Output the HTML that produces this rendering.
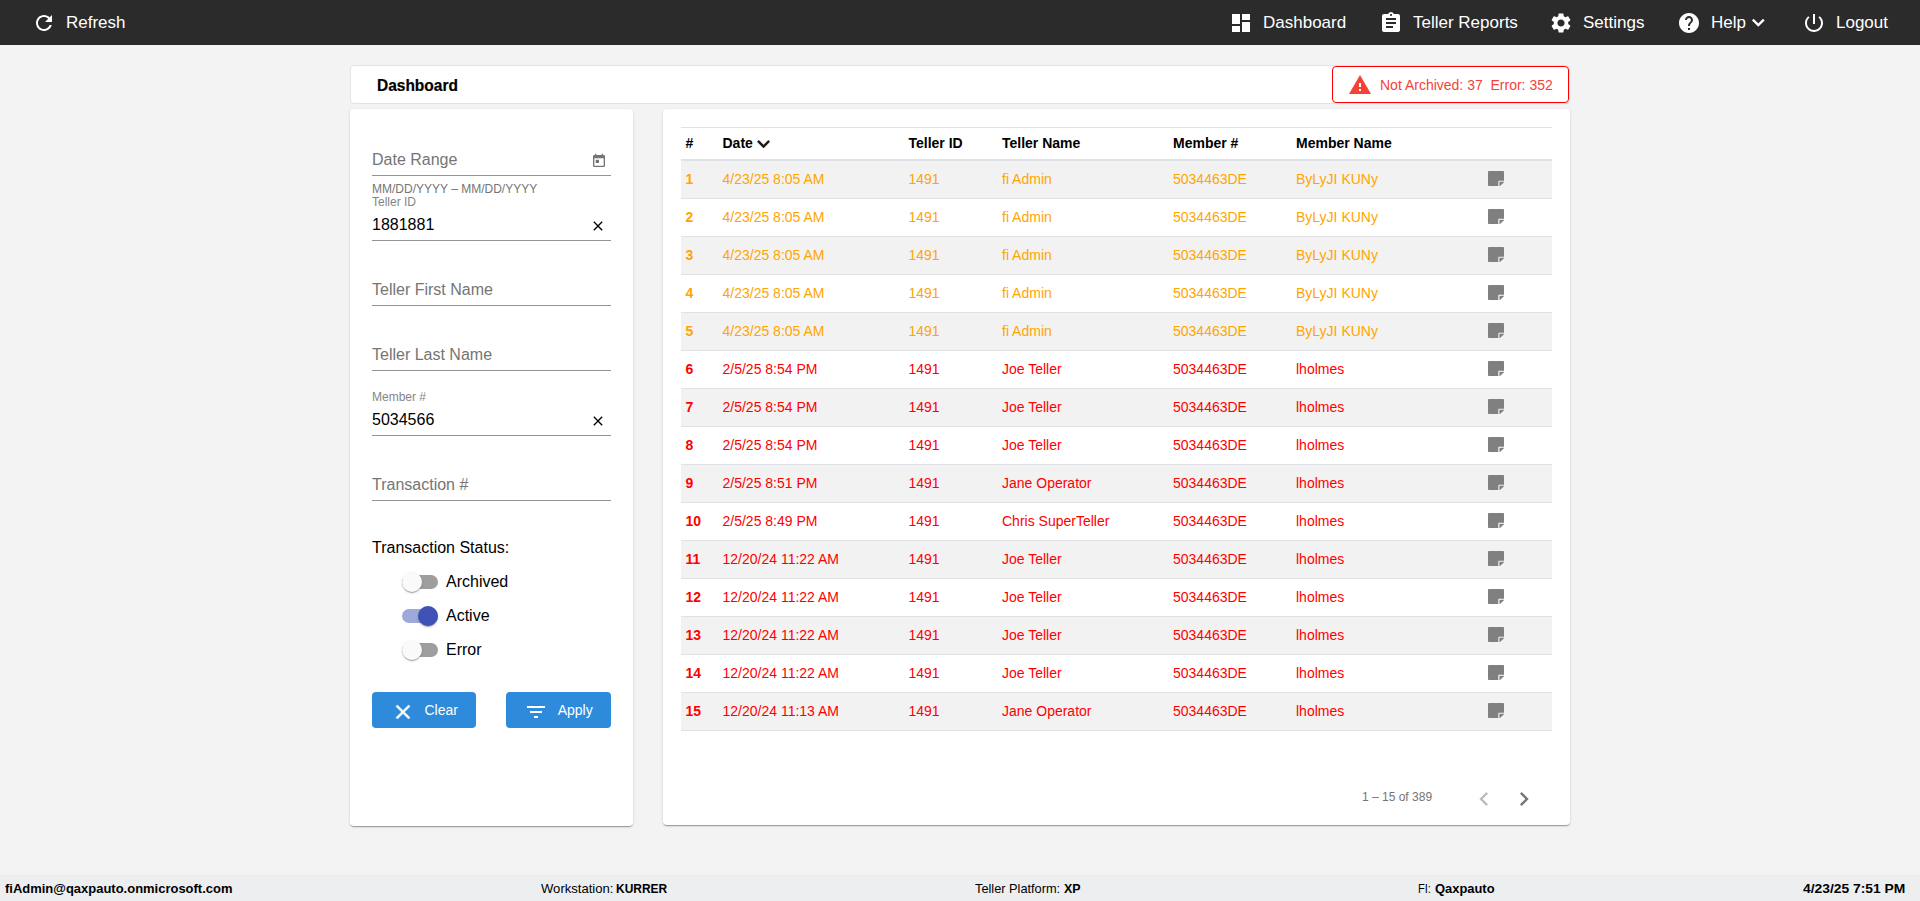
<!DOCTYPE html>
<html lang="en">
<head>
<meta charset="utf-8">
<title>Dashboard</title>
<style>
*{box-sizing:border-box}
html,body{margin:0;padding:0}
body{width:1920px;height:901px;overflow:hidden;background:#f3f3f3;font-family:"Liberation Sans",sans-serif;color:#000;position:relative}
svg{display:block}
/* NAV */
#nav{position:absolute;left:0;top:0;width:1920px;height:45px;background:#2b2b2b;color:#fff;font-size:17px}
#nav .item{position:absolute;top:0;height:45px;line-height:46px;white-space:nowrap}
#nav .item svg{position:absolute;fill:#fff}
/* TITLE */
#title{position:absolute;left:350px;top:65px;width:1220px;height:39px;background:#fff;border:1px solid #e3e3e3;border-radius:4px}
#title h1{position:absolute;left:25.9px;top:1px;margin:0;font-size:16px;line-height:37px;font-weight:bold;transform:scaleX(.968);transform-origin:0 50%;-webkit-text-stroke:.2px #000;white-space:nowrap}
#alert{position:absolute;left:1332px;top:66px;width:237px;height:37px;background:#fff;border:1px solid #ff0000;border-radius:4px;color:#f44336;font-size:14px;line-height:37px;white-space:nowrap}
#alert svg{position:absolute;left:15.4px;top:6px;fill:#f44336}
#alert span{position:absolute;left:47px;top:0}
/* PANELS */
.card{position:absolute;background:#fff;border-radius:4px;box-shadow:0 2px 1px -1px rgba(0,0,0,.2),0 1px 1px 0 rgba(0,0,0,.14),0 1px 3px 0 rgba(0,0,0,.12)}
#left{left:350px;top:109px;width:283px;height:717px}
#right{left:663px;top:109px;width:907px;height:716px}

/* LEFT FORM */
.fld{position:absolute;left:22px;width:239px;height:1px;background:#949494}
.ph{position:absolute;left:22px;font-size:16px;line-height:20px;color:#757575;white-space:nowrap}
.val{position:absolute;left:22px;font-size:16px;line-height:20px;color:#000;white-space:nowrap}
.lbl{position:absolute;left:22px;font-size:12px;line-height:14px;color:#858585;white-space:nowrap}
.hint{position:absolute;left:22px;font-size:12px;line-height:14px;color:#757575;white-space:nowrap}
.ico{position:absolute}
.tg{position:absolute;left:52px;width:36px;height:14px;border-radius:7px;background:#9e9e9e}
.tg i{position:absolute;left:0;top:-3px;width:20px;height:20px;border-radius:50%;background:#fafafa;box-shadow:0 2px 1px -1px rgba(0,0,0,.2),0 1px 1px 0 rgba(0,0,0,.14),0 1px 3px 0 rgba(0,0,0,.12)}
.tg.on{background:#9fa8da}
.tg.on i{left:16px;background:#3f51b5}
.tgl{position:absolute;left:96px;font-size:16px;line-height:20px;color:#000}
.btn{position:absolute;top:583px;height:36px;border-radius:4px;background:#2e8bdb;color:#fff;font-size:14px;line-height:36px}
.btn svg{position:absolute;fill:#fff;top:8px}
.btn span{position:absolute;top:0}

/* TABLE */
#tbl{position:absolute;left:18px;top:18px;width:871px;border-collapse:separate;border-spacing:0;font-size:14px;table-layout:fixed}
#tbl th{height:34px;border-top:1px solid #dee2e6;border-bottom:2px solid #dee2e6;text-align:left;font-weight:bold;padding:0 0 2px 4px;color:#000;vertical-align:middle;line-height:20px;white-space:nowrap}
#tbl td{height:38px;border-bottom:1px solid #dee2e6;padding:0 0 2px 4px;vertical-align:middle;line-height:20px;white-space:nowrap}
#tbl tr.s td{background:#f2f2f2}
#tbl tr.o td{color:#ffa500}
#tbl tr.r td{color:#ff0000}
#tbl td:first-child{font-weight:bold}
#tbl td svg{fill:#808080}
#tbl th:nth-child(-n+3),#tbl td:nth-child(-n+3){padding-left:4.5px}
#tbl td:last-child{padding:0 0 3px 7px}
#tbl th svg{display:inline-block;vertical-align:-.6px;margin-left:3.9px}
#pg{position:absolute;left:699px;top:681px;font-size:12px;line-height:14px;color:#757575;white-space:nowrap}
.pga{position:absolute;top:676px}
/* FOOTER */
#foot{position:absolute;left:0;top:875px;width:1920px;height:26px;background:#edeef0;font-size:13.5px;line-height:26px;color:#000}
#foot span,#foot b{position:absolute;top:1px;white-space:nowrap;transform-origin:0 50%;display:block}
#foot b{font-weight:bold}
</style>
</head>
<body>
<div id="nav">
<div class="item" style="left:66px"><svg style="left:-34px;top:11px" width="24" height="24" viewBox="0 0 24 24"><path d="M17.65 6.35C16.2 4.9 14.21 4 12 4c-4.42 0-7.99 3.58-7.99 8s3.57 8 7.99 8c3.73 0 6.84-2.55 7.73-6h-2.08c-.82 2.33-3.04 4-5.65 4-3.31 0-6-2.69-6-6s2.69-6 6-6c1.66 0 3.14.69 4.22 1.78L13 11h7V4l-2.35 2.35z"/></svg>Refresh</div>
<div class="item" style="left:1263px"><svg style="left:-34px;top:11px" width="24" height="24" viewBox="0 0 24 24"><path d="M3 13h8V3H3v10zm0 8h8v-6H3v6zm10 0h8V11h-8v10zm0-18v6h8V3h-8z"/></svg>Dashboard</div>
<div class="item" style="left:1413px"><svg style="left:-34px;top:11px" width="24" height="24" viewBox="0 0 24 24"><path d="M19 3h-4.18C14.4 1.84 13.3 1 12 1c-1.3 0-2.4.84-2.82 2H5c-1.1 0-2 .9-2 2v14c0 1.1.9 2 2 2h14c1.1 0 2-.9 2-2V5c0-1.1-.9-2-2-2zm-7 0c.55 0 1 .45 1 1s-.45 1-1 1-1-.45-1-1 .45-1 1-1zm2 14H7v-2h7v2zm3-4H7v-2h10v2zm0-4H7V7h10v2z"/></svg>Teller Reports</div>
<div class="item" style="left:1583px"><svg style="left:-34px;top:11px" width="24" height="24" viewBox="0 0 24 24"><path d="M19.14 12.94c.04-.3.06-.61.06-.94 0-.32-.02-.64-.07-.94l2.03-1.58c.18-.14.23-.41.12-.61l-1.92-3.32c-.12-.22-.37-.29-.59-.22l-2.39.96c-.5-.38-1.03-.7-1.62-.94l-.36-2.54c-.04-.24-.24-.41-.48-.41h-3.84c-.24 0-.43.17-.47.41l-.36 2.54c-.59.24-1.13.57-1.62.94l-2.39-.96c-.22-.08-.47 0-.59.22L2.74 8.87c-.12.21-.08.47.12.61l2.03 1.58c-.05.3-.09.63-.09.94s.02.64.07.94l-2.03 1.58c-.18.14-.23.41-.12.61l1.92 3.32c.12.22.37.29.59.22l2.39-.96c.5.38 1.03.7 1.62.94l.36 2.54c.05.24.24.41.48.41h3.84c.24 0 .44-.17.47-.41l.36-2.54c.59-.24 1.13-.56 1.62-.94l2.39.96c.22.08.47 0 .59-.22l1.92-3.32c.12-.22.07-.47-.12-.61l-2.01-1.58zM12 15.6c-1.98 0-3.6-1.62-3.6-3.6s1.62-3.6 3.6-3.6 3.6 1.62 3.6 3.6-1.62 3.6-3.6 3.6z"/></svg>Settings</div>
<div class="item" style="left:1711px"><svg style="left:-34px;top:11px" width="24" height="24" viewBox="0 0 24 24"><path d="M12 2C6.48 2 2 6.48 2 12s4.48 10 10 10 10-4.48 10-10S17.52 2 12 2zm1 17h-2v-2h2v2zm2.07-7.75l-.9.92C13.45 12.9 13 13.5 13 15h-2v-.5c0-1.1.45-2.1 1.17-2.83l1.24-1.26c.37-.36.59-.86.59-1.41 0-1.1-.9-2-2-2s-2 .9-2 2H8c0-2.21 1.79-4 4-4s4 1.79 4 4c0 .88-.36 1.68-.93 2.25z"/></svg>Help<svg style="left:40px;top:18.2px;fill:none" width="15" height="10" viewBox="0 0 15 10"><path d="M1.8 1.6L7.3 7.1 12.8 1.6" stroke="#fff" stroke-width="2.3" fill="none"/></svg></div>
<div class="item" style="left:1836px"><svg style="left:-34px;top:11px" width="24" height="24" viewBox="0 0 24 24"><path d="M13 3h-2v10h2V3zm4.83 2.170l-1.42 1.42C17.99 7.86 19 9.81 19 12c0 3.87-3.13 7-7 7s-7-3.13-7-7c0-2.19 1.01-4.14 2.58-5.42L6.17 5.17C4.23 6.82 3 9.26 3 12c0 4.97 4.03 9 9 9s9-4.03 9-9c0-2.740-1.23-5.18-3.17-6.83z"/></svg>Logout</div>
</div>
<div id="title"><h1>Dashboard</h1></div>
<div id="alert"><svg width="24" height="24" viewBox="0 0 24 24"><path d="M1 21h22L12 2 1 21zm12-3h-2v-2h2v2zm0-4h-2v-4h2v4z"/></svg><span>Not Archived: 37&nbsp; Error: 352</span></div>
<div id="left" class="card">
<div class="ph" style="top:41px">Date Range</div>
<svg class="ico" style="left:241px;top:44px;fill:#757575" width="16" height="16" viewBox="0 0 24 24"><path d="M19 3h-1V1h-2v2H8V1H6v2H5c-1.11 0-1.99.9-1.99 2L3 19c0 1.1.89 2 2 2h14c1.1 0 2-.9 2-2V5c0-1.1-.9-2-2-2zm0 16H5V8h14v11zM7 10h5v5H7z"/></svg>
<div class="fld" style="top:66px"></div>
<div class="hint" style="top:73px">MM/DD/YYYY – MM/DD/YYYY</div>
<div class="lbl" style="top:86px">Teller ID</div>
<div class="val" style="top:106px">1881881</div>
<svg class="ico" style="left:239.5px;top:109px;fill:#000" width="16" height="16" viewBox="0 0 24 24"><path d="M19 6.41L17.59 5 12 10.59 6.410 5 5 6.41 10.59 12 5 17.59 6.41 19 12 13.41 17.59 19 19 17.59 13.410 12z"/></svg>
<div class="fld" style="top:131px"></div>
<div class="ph" style="top:171px">Teller First Name</div>
<div class="fld" style="top:196px"></div>
<div class="ph" style="top:236px">Teller Last Name</div>
<div class="fld" style="top:261px"></div>
<div class="lbl" style="top:281px">Member #</div>
<div class="val" style="top:301px">5034566</div>
<svg class="ico" style="left:239.5px;top:304px;fill:#000" width="16" height="16" viewBox="0 0 24 24"><path d="M19 6.41L17.59 5 12 10.59 6.410 5 5 6.41 10.59 12 5 17.59 6.41 19 12 13.41 17.59 19 19 17.59 13.410 12z"/></svg>
<div class="fld" style="top:326px"></div>
<div class="ph" style="top:366px">Transaction #</div>
<div class="fld" style="top:391px"></div>
<div class="val" style="top:429px">Transaction Status:</div>
<div class="tg" style="top:466px"><i></i></div><div class="tgl" style="top:463px">Archived</div>
<div class="tg on" style="top:500px"><i></i></div><div class="tgl" style="top:497px">Active</div>
<div class="tg" style="top:534px"><i></i></div><div class="tgl" style="top:531px">Error</div>
<div class="btn" style="left:22px;width:104px"><svg style="left:18.5px" width="24" height="24" viewBox="0 0 24 24"><path stroke="#fff" stroke-width=".5" d="M19 6.41L17.59 5 12 10.59 6.410 5 5 6.41 10.59 12 5 17.59 6.41 19 12 13.41 17.59 19 19 17.59 13.410 12z"/></svg><span style="left:52.5px">Clear</span></div>
<div class="btn" style="left:156px;width:105px"><svg style="left:18px" width="24" height="24" viewBox="0 0 24 24"><path d="M10 18h4v-2h-4v2zM3 6v2h18V6H3zm3 7h12v-2H6v2z"/></svg><span style="left:51.7px">Apply</span></div>
</div>
<div id="right" class="card">
<table id="tbl">
<colgroup><col style="width:37px"><col style="width:186px"><col style="width:94px"><col style="width:171px"><col style="width:123px"><col style="width:189px"><col style="width:71px"></colgroup>
<thead><tr><th>#</th><th>Date<svg width="13.1" height="8.3" viewBox="0 0 13.1 8.3"><path d="M.9 .9L6.55 6.55 12.2 .9" stroke="#1c1c1c" stroke-width="2.5" fill="none"/></svg></th><th>Teller ID</th><th>Teller Name</th><th>Member #</th><th>Member Name</th><th></th></tr></thead>
<tbody>
<tr class="o s"><td>1</td><td>4/23/25 8:05 AM</td><td>1491</td><td>fi Admin</td><td>5034463DE</td><td>ByLyJI KUNy</td><td><svg width="16" height="15" viewBox="0 32 448 448" preserveAspectRatio="none"><path d="M312 320h136V56c0-13.300-10.700-24-24-24H24C10.700 32 0 42.700 0 56v400c0 13.300 10.700 24 24 24h264V344c0-13.200 10.800-24 24-24zm129 55l-98 98c-4.500 4.500-10.600 7-17 7h-6V352h128v6.100c0 6.300-2.500 12.400-7 16.900z"/></svg></td></tr>
<tr class="o"><td>2</td><td>4/23/25 8:05 AM</td><td>1491</td><td>fi Admin</td><td>5034463DE</td><td>ByLyJI KUNy</td><td><svg width="16" height="15" viewBox="0 32 448 448" preserveAspectRatio="none"><path d="M312 320h136V56c0-13.300-10.700-24-24-24H24C10.700 32 0 42.700 0 56v400c0 13.300 10.700 24 24 24h264V344c0-13.200 10.800-24 24-24zm129 55l-98 98c-4.500 4.500-10.600 7-17 7h-6V352h128v6.100c0 6.300-2.500 12.400-7 16.900z"/></svg></td></tr>
<tr class="o s"><td>3</td><td>4/23/25 8:05 AM</td><td>1491</td><td>fi Admin</td><td>5034463DE</td><td>ByLyJI KUNy</td><td><svg width="16" height="15" viewBox="0 32 448 448" preserveAspectRatio="none"><path d="M312 320h136V56c0-13.300-10.700-24-24-24H24C10.700 32 0 42.700 0 56v400c0 13.300 10.700 24 24 24h264V344c0-13.200 10.800-24 24-24zm129 55l-98 98c-4.500 4.500-10.600 7-17 7h-6V352h128v6.100c0 6.300-2.500 12.400-7 16.900z"/></svg></td></tr>
<tr class="o"><td>4</td><td>4/23/25 8:05 AM</td><td>1491</td><td>fi Admin</td><td>5034463DE</td><td>ByLyJI KUNy</td><td><svg width="16" height="15" viewBox="0 32 448 448" preserveAspectRatio="none"><path d="M312 320h136V56c0-13.300-10.700-24-24-24H24C10.700 32 0 42.700 0 56v400c0 13.300 10.700 24 24 24h264V344c0-13.200 10.800-24 24-24zm129 55l-98 98c-4.500 4.500-10.600 7-17 7h-6V352h128v6.100c0 6.300-2.500 12.400-7 16.900z"/></svg></td></tr>
<tr class="o s"><td>5</td><td>4/23/25 8:05 AM</td><td>1491</td><td>fi Admin</td><td>5034463DE</td><td>ByLyJI KUNy</td><td><svg width="16" height="15" viewBox="0 32 448 448" preserveAspectRatio="none"><path d="M312 320h136V56c0-13.300-10.700-24-24-24H24C10.700 32 0 42.700 0 56v400c0 13.300 10.700 24 24 24h264V344c0-13.200 10.800-24 24-24zm129 55l-98 98c-4.500 4.500-10.600 7-17 7h-6V352h128v6.100c0 6.300-2.500 12.400-7 16.900z"/></svg></td></tr>
<tr class="r"><td>6</td><td>2/5/25 8:54 PM</td><td>1491</td><td>Joe Teller</td><td>5034463DE</td><td>lholmes</td><td><svg width="16" height="15" viewBox="0 32 448 448" preserveAspectRatio="none"><path d="M312 320h136V56c0-13.300-10.700-24-24-24H24C10.700 32 0 42.700 0 56v400c0 13.300 10.700 24 24 24h264V344c0-13.200 10.800-24 24-24zm129 55l-98 98c-4.500 4.500-10.600 7-17 7h-6V352h128v6.100c0 6.300-2.500 12.400-7 16.900z"/></svg></td></tr>
<tr class="r s"><td>7</td><td>2/5/25 8:54 PM</td><td>1491</td><td>Joe Teller</td><td>5034463DE</td><td>lholmes</td><td><svg width="16" height="15" viewBox="0 32 448 448" preserveAspectRatio="none"><path d="M312 320h136V56c0-13.300-10.700-24-24-24H24C10.700 32 0 42.700 0 56v400c0 13.300 10.700 24 24 24h264V344c0-13.200 10.800-24 24-24zm129 55l-98 98c-4.500 4.500-10.600 7-17 7h-6V352h128v6.100c0 6.300-2.500 12.400-7 16.900z"/></svg></td></tr>
<tr class="r"><td>8</td><td>2/5/25 8:54 PM</td><td>1491</td><td>Joe Teller</td><td>5034463DE</td><td>lholmes</td><td><svg width="16" height="15" viewBox="0 32 448 448" preserveAspectRatio="none"><path d="M312 320h136V56c0-13.300-10.700-24-24-24H24C10.700 32 0 42.700 0 56v400c0 13.300 10.700 24 24 24h264V344c0-13.200 10.800-24 24-24zm129 55l-98 98c-4.500 4.500-10.600 7-17 7h-6V352h128v6.100c0 6.300-2.500 12.400-7 16.900z"/></svg></td></tr>
<tr class="r s"><td>9</td><td>2/5/25 8:51 PM</td><td>1491</td><td>Jane Operator</td><td>5034463DE</td><td>lholmes</td><td><svg width="16" height="15" viewBox="0 32 448 448" preserveAspectRatio="none"><path d="M312 320h136V56c0-13.300-10.700-24-24-24H24C10.700 32 0 42.700 0 56v400c0 13.300 10.700 24 24 24h264V344c0-13.200 10.800-24 24-24zm129 55l-98 98c-4.500 4.500-10.600 7-17 7h-6V352h128v6.100c0 6.300-2.500 12.400-7 16.900z"/></svg></td></tr>
<tr class="r"><td>10</td><td>2/5/25 8:49 PM</td><td>1491</td><td>Chris SuperTeller</td><td>5034463DE</td><td>lholmes</td><td><svg width="16" height="15" viewBox="0 32 448 448" preserveAspectRatio="none"><path d="M312 320h136V56c0-13.300-10.700-24-24-24H24C10.700 32 0 42.700 0 56v400c0 13.300 10.700 24 24 24h264V344c0-13.200 10.800-24 24-24zm129 55l-98 98c-4.500 4.500-10.600 7-17 7h-6V352h128v6.100c0 6.300-2.500 12.400-7 16.900z"/></svg></td></tr>
<tr class="r s"><td>11</td><td>12/20/24 11:22 AM</td><td>1491</td><td>Joe Teller</td><td>5034463DE</td><td>lholmes</td><td><svg width="16" height="15" viewBox="0 32 448 448" preserveAspectRatio="none"><path d="M312 320h136V56c0-13.300-10.700-24-24-24H24C10.700 32 0 42.700 0 56v400c0 13.300 10.700 24 24 24h264V344c0-13.200 10.800-24 24-24zm129 55l-98 98c-4.500 4.500-10.600 7-17 7h-6V352h128v6.100c0 6.300-2.500 12.400-7 16.900z"/></svg></td></tr>
<tr class="r"><td>12</td><td>12/20/24 11:22 AM</td><td>1491</td><td>Joe Teller</td><td>5034463DE</td><td>lholmes</td><td><svg width="16" height="15" viewBox="0 32 448 448" preserveAspectRatio="none"><path d="M312 320h136V56c0-13.300-10.700-24-24-24H24C10.700 32 0 42.700 0 56v400c0 13.300 10.700 24 24 24h264V344c0-13.200 10.800-24 24-24zm129 55l-98 98c-4.500 4.500-10.600 7-17 7h-6V352h128v6.100c0 6.300-2.500 12.400-7 16.900z"/></svg></td></tr>
<tr class="r s"><td>13</td><td>12/20/24 11:22 AM</td><td>1491</td><td>Joe Teller</td><td>5034463DE</td><td>lholmes</td><td><svg width="16" height="15" viewBox="0 32 448 448" preserveAspectRatio="none"><path d="M312 320h136V56c0-13.300-10.700-24-24-24H24C10.700 32 0 42.700 0 56v400c0 13.300 10.700 24 24 24h264V344c0-13.200 10.800-24 24-24zm129 55l-98 98c-4.500 4.500-10.600 7-17 7h-6V352h128v6.100c0 6.300-2.500 12.400-7 16.900z"/></svg></td></tr>
<tr class="r"><td>14</td><td>12/20/24 11:22 AM</td><td>1491</td><td>Joe Teller</td><td>5034463DE</td><td>lholmes</td><td><svg width="16" height="15" viewBox="0 32 448 448" preserveAspectRatio="none"><path d="M312 320h136V56c0-13.300-10.700-24-24-24H24C10.700 32 0 42.700 0 56v400c0 13.300 10.700 24 24 24h264V344c0-13.200 10.800-24 24-24zm129 55l-98 98c-4.500 4.500-10.600 7-17 7h-6V352h128v6.100c0 6.300-2.500 12.400-7 16.900z"/></svg></td></tr>
<tr class="r s"><td>15</td><td>12/20/24 11:13 AM</td><td>1491</td><td>Jane Operator</td><td>5034463DE</td><td>lholmes</td><td><svg width="16" height="15" viewBox="0 32 448 448" preserveAspectRatio="none"><path d="M312 320h136V56c0-13.300-10.700-24-24-24H24C10.700 32 0 42.700 0 56v400c0 13.300 10.700 24 24 24h264V344c0-13.200 10.800-24 24-24zm129 55l-98 98c-4.500 4.500-10.600 7-17 7h-6V352h128v6.100c0 6.300-2.500 12.400-7 16.900z"/></svg></td></tr>
</tbody>
</table>
<div id="pg">1 – 15 of 389</div>
<svg class="pga" style="left:807px;fill:#bdbdbd" width="28" height="28" viewBox="0 0 24 24"><path d="M15.41 7.41L14 6l-6 6 6 6 1.41-1.41L10.83 12z"/></svg>
<svg class="pga" style="left:847px;fill:#757575" width="28" height="28" viewBox="0 0 24 24"><path d="M10 6L8.59 7.41 13.17 12l-4.58 4.59L10 18l6-6z"/></svg>
</div>
<div id="foot">
<b style="left:5.2px;transform:scaleX(.961)">fiAdmin@qaxpauto.onmicrosoft.com</b>
<span style="left:540.8px;transform:scaleX(.969)">Workstation:</span><b style="left:615.8px;transform:scaleX(.886)">KURRER</b>
<span style="left:975.2px;transform:scaleX(.946)">Teller Platform:</span><b style="left:1063.5px;transform:scaleX(.922)">XP</b>
<span style="left:1418.2px;transform:scaleX(.821)">FI:</span><b style="left:1434.8px;transform:scaleX(.956)">Qaxpauto</b>
<b style="left:1802.6px;transform:scaleX(1.025)">4/23/25 7:51 PM</b>
</div>
</body>
</html>
